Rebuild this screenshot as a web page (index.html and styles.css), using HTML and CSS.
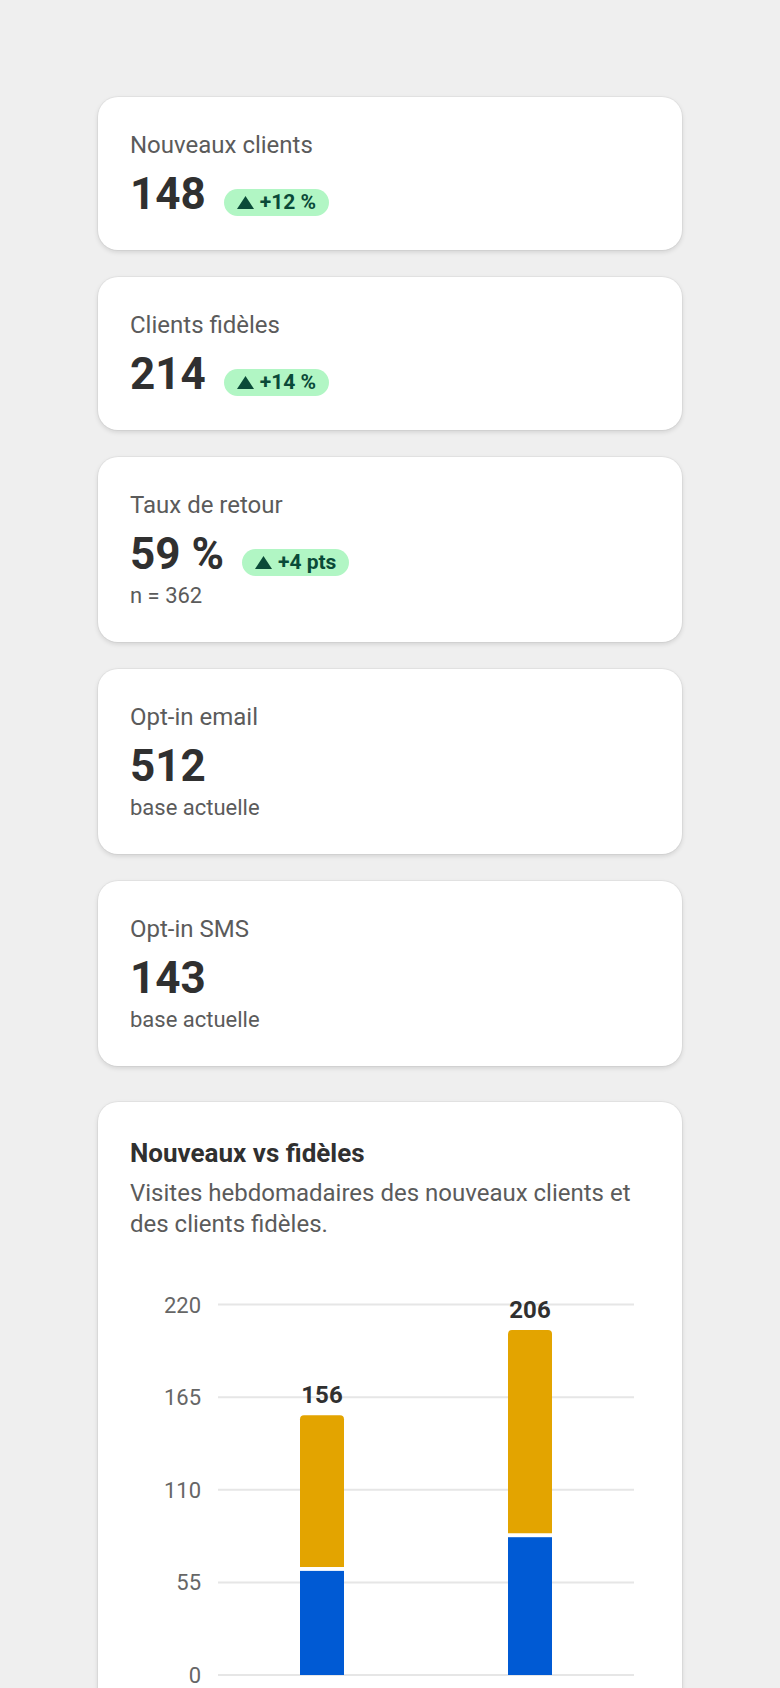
FILE: index.html
```html
<!DOCTYPE html>
<html lang="fr">
<head>
<meta charset="UTF-8" />
<meta name="viewport" content="width=device-width, initial-scale=1" />
<title>Fidélité clients</title>
<link rel="stylesheet" href="styles.css">
</head>
<body>

<main class="page">

  <section class="kpi">
    <div class="kpi-label">Nouveaux clients</div>
    <div class="kpi-row">
      <span class="kpi-value">148</span>
      <span class="badge"><svg class="arrow" viewBox="0 0 17 13" width="17" height="13"><path d="M8.5 0 L17 13 H0 Z" /></svg>+12 %</span>
    </div>
  </section>

  <section class="kpi">
    <div class="kpi-label">Clients fidèles</div>
    <div class="kpi-row">
      <span class="kpi-value">214</span>
      <span class="badge"><svg class="arrow" viewBox="0 0 17 13" width="17" height="13"><path d="M8.5 0 L17 13 H0 Z" /></svg>+14 %</span>
    </div>
  </section>

  <section class="kpi">
    <div class="kpi-label">Taux de retour</div>
    <div class="kpi-row">
      <span class="kpi-value">59 %</span>
      <span class="badge"><svg class="arrow" viewBox="0 0 17 13" width="17" height="13"><path d="M8.5 0 L17 13 H0 Z" /></svg>+4 pts</span>
    </div>
    <div class="kpi-sub">n = 362</div>
  </section>

  <section class="kpi">
    <div class="kpi-label">Opt-in email</div>
    <div class="kpi-row">
      <span class="kpi-value">512</span>
    </div>
    <div class="kpi-sub">base actuelle</div>
  </section>

  <section class="kpi">
    <div class="kpi-label">Opt-in SMS</div>
    <div class="kpi-row">
      <span class="kpi-value">143</span>
    </div>
    <div class="kpi-sub">base actuelle</div>
  </section>

  <section class="chart-card">
    <h2>Nouveaux vs fidèles</h2>
    <p class="chart-desc">Visites hebdomadaires des nouveaux clients et des clients fidèles.</p>

    <!-- 0 -> y 411, 1 unité = 1.684 px -->
    <svg class="chart" viewBox="0 0 520 424" width="520" height="424">
      <g class="grid">
        <line x1="88" y1="40.6" x2="504" y2="40.6" />
        <line x1="88" y1="133.2" x2="504" y2="133.2" />
        <line x1="88" y1="225.8" x2="504" y2="225.8" />
        <line x1="88" y1="318.4" x2="504" y2="318.4" />
        <line x1="88" y1="411" x2="504" y2="411" />
      </g>
      <g class="axis">
        <text x="71" y="48.6">220</text>
        <text x="71" y="141.2">165</text>
        <text x="71" y="233.8">110</text>
        <text x="71" y="326.4">55</text>
        <text x="71" y="419">0</text>
      </g>

      <!-- semaine 1 : 63 nouveaux + 93 fidèles -->
      <path class="loyal" d="M170 302.9 V155.3 Q170 151.3 174 151.3 H210 Q214 151.3 214 155.3 V302.9 Z" />
      <rect class="new" x="170" y="306.9" width="44" height="104.1" />
      <text class="total" x="192" y="139">156</text>

      <!-- semaine 2 : 83 nouveaux + 123 fidèles -->
      <path class="loyal" d="M378 269.2 V70.1 Q378 66.1 382 66.1 H418 Q422 66.1 422 70.1 V269.2 Z" />
      <rect class="new" x="378" y="273.2" width="44" height="137.8" />
      <text class="total" x="400" y="53.6">206</text>
    </svg>
  </section>

</main>

</body>
</html>
```

FILE: styles.css
```css
body {
  font-family: Roboto, "Noto Sans", Arial, sans-serif;
  background: #efefef;
  margin: 0;
  padding: 0;
  color: #303030;
}
.page {
  max-width: 584px;
  margin: 0 auto;
  padding: 97px 0 48px;
}

/* Cartes KPI */
.kpi {
  background: white;
  border-radius: 20px;
  padding: 32px;
  margin-bottom: 27px;
  box-shadow: 0 0 0 1px rgba(0,0,0,0.035), 0 2px 5px rgba(0,0,0,0.13);
}
.kpi-label {
  font-size: 24px;
  line-height: 1.4;
  color: #5b5b5b;
}
.kpi-row {
  display: flex;
  align-items: baseline;
  gap: 18px;
  margin-top: 7px;
}
.kpi-value {
  font-size: 44px;
  font-weight: bold;
  line-height: 1.1;
  color: #303030;
}
.badge {
  font-size: 21px;
  font-weight: bold;
  line-height: 25px;
  padding: 1px 13px;
  border-radius: 999px;
  background: #b1f6c4;
  color: #0a4a38;
}
.badge .arrow {
  fill: #0a4a38;
  margin-right: 6px;
  vertical-align: baseline;
}
.kpi-sub {
  font-size: 22px;
  line-height: 28px;
  color: #5b5b5b;
  margin-top: 4px;
}

/* Graphique */
.chart-card {
  background: white;
  border-radius: 20px;
  padding: 36px 32px 32px;
  margin-top: 36px;
  box-shadow: 0 0 0 1px rgba(0,0,0,0.035), 0 2px 5px rgba(0,0,0,0.13);
}
.chart-card h2 {
  font-size: 26px;
  line-height: 30px;
  margin: 0;
  color: #303030;
}
.chart-desc {
  font-size: 24px;
  line-height: 1.3;
  margin: 10px 0 0;
  color: #5b5b5b;
}
.chart {
  display: block;
  margin-top: 24px;
}
.grid line {
  stroke: #e6e6e6;
  stroke-width: 2;
}
.axis text {
  font-size: 22px;
  fill: #666;
  text-anchor: end;
}
.loyal {
  fill: #e3a400;
}
.new {
  fill: #005ad4;
}
.total {
  font-size: 24px;
  font-weight: bold;
  fill: #303030;
  text-anchor: middle;
}
```
